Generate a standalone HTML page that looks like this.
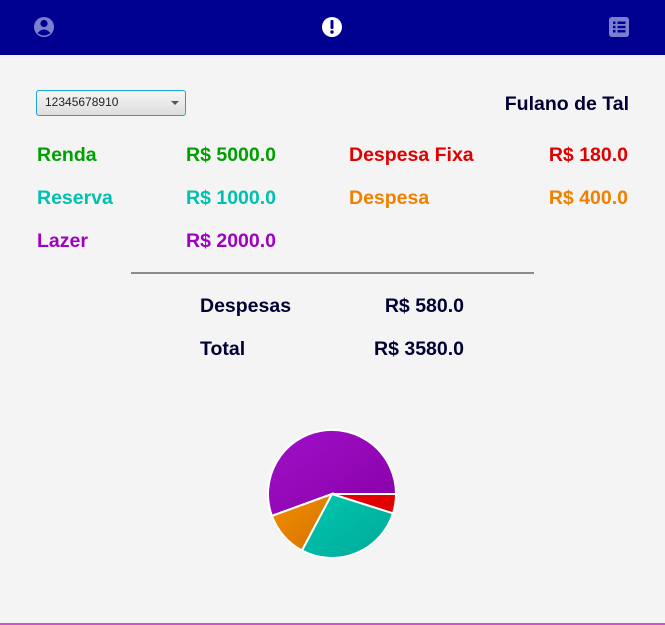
<!DOCTYPE html>
<html><head><style>
body{margin:0;width:665px;height:625px;background:#f4f4f4;position:relative;overflow:hidden;font-family:"Liberation Sans",sans-serif;font-weight:bold}
.bar{position:absolute;left:0;top:0;width:665px;height:55px;background:#000090}
.t{position:absolute;font-size:19.5px;line-height:20px;white-space:nowrap}
.r{text-align:right}
</style></head><body>
<div class="bar"></div>
<svg style="position:absolute;left:0;top:0" width="665" height="55">
<circle cx="44" cy="27" r="10" fill="#7b7fd0"/>
<circle cx="44" cy="23.5" r="3.6" fill="#000090"/>
<path d="M37.5 33 Q44 26 50.5 33 Q44 38 37.5 33Z" fill="#000090"/>
<circle cx="332" cy="27" r="10" fill="#fff"/>
<rect x="330.5" y="20" width="3" height="9" rx="1" fill="#000090"/>
<circle cx="332" cy="32" r="1.7" fill="#000090"/>
<rect x="609" y="17" width="20" height="20" rx="3" fill="#7b7fd0"/>
<g fill="#000090"><rect x="613" y="21.5" width="2.5" height="2.5"/><rect x="613" y="25.8" width="2.5" height="2.5"/><rect x="613" y="30" width="2.5" height="2.5"/><rect x="617.5" y="21.5" width="8" height="2.5"/><rect x="617.5" y="25.8" width="8" height="2.5"/><rect x="617.5" y="30" width="8" height="2.5"/></g>
</svg>
<div style="position:absolute;left:36px;top:90px;width:150px;height:26px;border:1px solid #1aa3e0;border-radius:3px;background:linear-gradient(#f6f6f6,#dedede);box-sizing:border-box"></div>
<div class="t" style="left:45px;top:95px;font-size:12px;line-height:14px;font-weight:normal;color:#222">12345678910</div>
<div style="position:absolute;left:171px;top:101px;border-left:4px solid transparent;border-right:4px solid transparent;border-top:4px solid #555"></div>
<div class="t r" style="right:36px;top:94px;color:#000033">Fulano de Tal</div>
<div class="t" style="left:37px;top:145px;color:#00a000">Renda</div>
<div class="t" style="left:186px;top:145px;color:#00a000">R$ 5000.0</div>
<div class="t" style="left:37px;top:188px;color:#00c0b0">Reserva</div>
<div class="t" style="left:186px;top:188px;color:#00c0b0">R$ 1000.0</div>
<div class="t" style="left:37px;top:231px;color:#a000c0">Lazer</div>
<div class="t" style="left:186px;top:231px;color:#a000c0">R$ 2000.0</div>
<div class="t" style="left:349px;top:145px;color:#e00000">Despesa Fixa</div>
<div class="t r" style="right:37px;top:145px;color:#e00000">R$ 180.0</div>
<div class="t" style="left:349px;top:188px;color:#f08000">Despesa</div>
<div class="t r" style="right:37px;top:188px;color:#f08000">R$ 400.0</div>
<div style="position:absolute;left:131px;top:272px;width:403px;height:2px;background:#8a8a8a"></div>
<div class="t" style="left:200px;top:296px;color:#000033">Despesas</div>
<div class="t r" style="right:201px;top:296px;color:#000033">R$ 580.0</div>
<div class="t" style="left:200px;top:339px;color:#000033">Total</div>
<div class="t r" style="right:201px;top:339px;color:#000033">R$ 3580.0</div>
<svg style="position:absolute;left:0;top:0" width="665" height="625">
<defs>
<linearGradient id="gp" x1="0" y1="0" x2="1" y2="1"><stop offset="0" stop-color="#a010c8"/><stop offset="1" stop-color="#8800a8"/></linearGradient>
<linearGradient id="gt" x1="0" y1="0" x2="1" y2="1"><stop offset="0" stop-color="#00c8b0"/><stop offset="1" stop-color="#00a898"/></linearGradient>
<linearGradient id="go" x1="0" y1="0" x2="1" y2="1"><stop offset="0" stop-color="#f09000"/><stop offset="1" stop-color="#d87000"/></linearGradient>
</defs>
<g stroke="#fff" stroke-width="2">
<path d="M332 494 L396 494 A64 64 0 1 0 271.9 515.9Z" fill="url(#gp)"/>
<path d="M332 494 L271.9 515.9 A64 64 0 0 0 302 550.5Z" fill="url(#go)"/>
<path d="M332 494 L302 550.5 A64 64 0 0 0 393 513.3Z" fill="url(#gt)"/>
<path d="M332 494 L393 513.3 A64 64 0 0 0 396 494Z" fill="#e00000"/>
</g>
<rect x="0" y="623" width="665" height="2" fill="#d050d0"/>
</svg>
</body></html>
